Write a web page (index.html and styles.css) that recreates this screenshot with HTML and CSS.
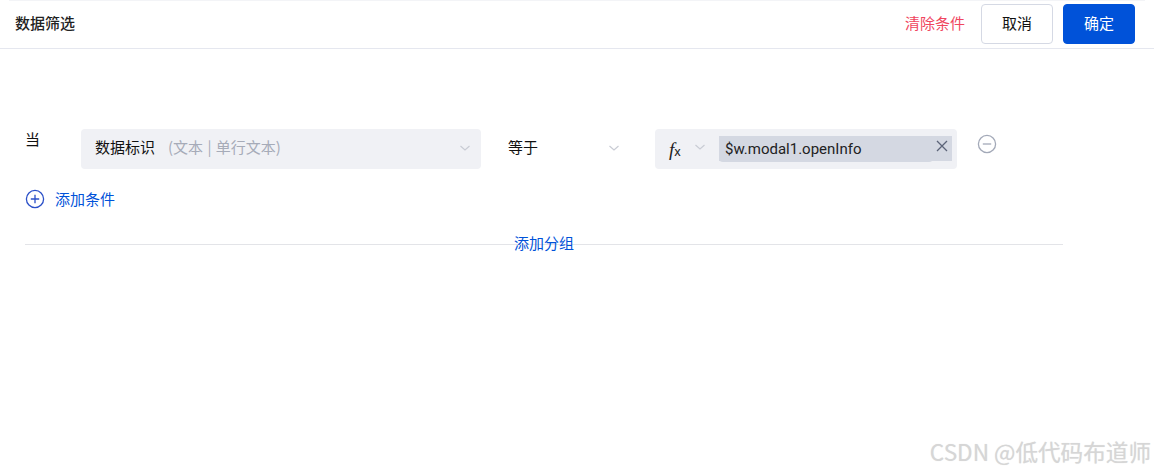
FILE: index.html
```html
<!DOCTYPE html>
<html lang="zh-CN">
<head>
  <meta charset="UTF-8">
  <title>数据筛选</title>
  <link rel="stylesheet" href="styles.css">
</head>
<body>
  <div class="page">
    <div class="top-line"></div>
    <header class="header">
      <h1 class="title">数据筛选</h1>
      <div class="actions">
        <a class="clear">清除条件</a>
        <button class="btn" type="button">取消</button>
        <button class="btn primary" type="button">确定</button>
      </div>
    </header>

    <main class="content">
      <div class="row">
        <span class="when">当</span>
        <div class="select field">
          <span class="field-name">数据标识</span>
          <span class="field-type">(文本 | 单行文本)</span>
          <svg class="chevron" width="12" height="12" viewBox="0 0 12 12"><path d="M1.5 4l4.5 4 4.5-4" /></svg>
        </div>
        <div class="select operator">
          <span>等于</span>
          <svg class="chevron" width="12" height="12" viewBox="0 0 12 12"><path d="M1.5 4l4.5 4 4.5-4" /></svg>
        </div>
        <div class="value">
          <span class="fx"><i>f</i><small>x</small></span>
          <svg class="chevron" width="12" height="12" viewBox="0 0 12 12"><path d="M1.5 4l4.5 4 4.5-4" /></svg>
          <div class="tag">
            <span class="tag-text">$w.modal1.openInfo</span>
            <svg class="tag-close" width="12" height="12" viewBox="0 0 12 12"><path d="M1 1l10 10M11 1L1 11" /></svg>
          </div>
        </div>
        <svg class="remove" width="20" height="20" viewBox="0 0 20 20">
          <circle cx="10" cy="10" r="8.6" />
          <path d="M5.8 10h8.4" />
        </svg>
      </div>

      <a class="add-condition">
        <svg width="20" height="20" viewBox="0 0 20 20">
          <circle cx="10" cy="10" r="8.6" />
          <path d="M10 5.8v8.4M5.8 10h8.4" />
        </svg>
        <span>添加条件</span>
      </a>

      <div class="divider"><a>添加分组</a></div>
    </main>

    <div class="watermark">CSDN @低代码布道师</div>
  </div>
</body>
</html>
```

FILE: styles.css
```css
/* General styles */
html, body {
  margin: 0;
  padding: 0;
  height: 100%;
  background: #fff;
}

body {
  font-family: "Noto Sans CJK SC", Roboto, sans-serif;
  font-size: 15px;
  color: #111;
  overflow: hidden;
}

.page {
  position: relative;
  height: 474px;
}

.top-line {
  height: 1px;
  margin: 0 9px;
  background: #f3f4f7;
}

/* Header */
.header {
  height: 47px;
  display: flex;
  align-items: center;
  justify-content: space-between;
  padding: 0 19px 0 15px;
  border-bottom: 1px solid #e5e7ef;
}

.title {
  margin: 0 0 5px;
  font-size: 15px;
  font-weight: 500;
  color: #222;
}

.actions {
  display: flex;
  align-items: center;
  gap: 10px;
  margin-bottom: 1px;
}

.clear {
  color: #f0465f;
  margin: 0 6px 3px 0;
}

.btn {
  width: 72px;
  height: 40px;
  border: 1px solid #d5d9e4;
  border-radius: 4px;
  background: #fff;
  color: #111;
  font: inherit;
  padding: 0 0 3px;
}

.btn.primary {
  background: #0052d9;
  border-color: #0052d9;
  color: #fff;
}

/* Filter row */
.content {
  padding: 80px 91px 0 25px;
}

.row {
  display: flex;
  align-items: flex-start;
}

.when {
  width: 56px;
  line-height: 20px;
}

.select {
  height: 40px;
  display: flex;
  align-items: center;
  border-radius: 4px;
  box-sizing: border-box;
  padding-bottom: 6px;
}

.field {
  width: 400px;
  padding-left: 14px;
  padding-right: 10px;
  background: #f0f1f5;
}

.field-name {
  margin-right: 13px;
}

.field-type {
  color: #a6abb8;
  word-spacing: 1px;
}

.operator {
  width: 140px;
  margin-left: 14px;
  padding-right: 15px;
  padding-left: 13px;
}

.chevron {
  margin-left: auto;
  fill: none;
  stroke: #c9ccd4;
  stroke-width: 1.2;
}

.select .chevron {
  margin-top: 3px;
}

.value {
  width: 302px;
  height: 40px;
  box-sizing: border-box;
  margin-left: 20px;
  padding: 7px 5px 0 14px;
  display: flex;
  align-items: flex-start;
  background: #f0f1f5;
  border-radius: 4px;
}

.fx {
  width: 20px;
  height: 26px;
  line-height: 28px;
  color: #222;
  font-family: "Liberation Serif", serif;
  font-size: 19px;
}

.fx small {
  font-family: "Noto Sans CJK SC", sans-serif;
  font-size: 13px;
}

.value .chevron {
  margin: 5px 0 0 5px;
}

.tag {
  width: 233px;
  height: 25px;
  margin-left: 13px;
  display: flex;
  justify-content: space-between;
  background: #d4d8e2;
}

.tag-text {
  flex: 1;
  height: 26px;
  padding-left: 6px;
  font-family: Roboto, sans-serif;
  line-height: 26px;
  color: #222;
  background: #d4d8e2;
  border-radius: 4px;
}

.tag-close {
  margin: 4px 4px 0 3px;
  stroke: #5c6478;
  stroke-width: 1.3;
  fill: none;
}

.remove {
  margin: 5px 0 0 20px;
  fill: none;
  stroke: #a3a9b8;
  stroke-width: 1.3;
}

/* Add links */
.add-condition {
  display: flex;
  align-items: center;
  gap: 10px;
  height: 20px;
  margin-top: 20px;
  color: #0052d9;
}

.add-condition span {
  margin-bottom: 2px;
}

.add-condition svg {
  fill: none;
  stroke: #2b50c8;
  stroke-width: 1.3;
}

.divider {
  display: flex;
  justify-content: center;
  height: 1px;
  margin-top: 35px;
  background: #e3e4e8;
}

.divider a {
  margin-top: -2px;
  line-height: 1px;
  color: #0052d9;
}

/* Watermark over the page */
.watermark {
  position: absolute;
  right: 3px;
  bottom: 8px;
  font-size: 22.6px;
  line-height: 28px;
  color: #d6d6d6;
  text-shadow: 0 0 1px #e2e2e2;
}
```
